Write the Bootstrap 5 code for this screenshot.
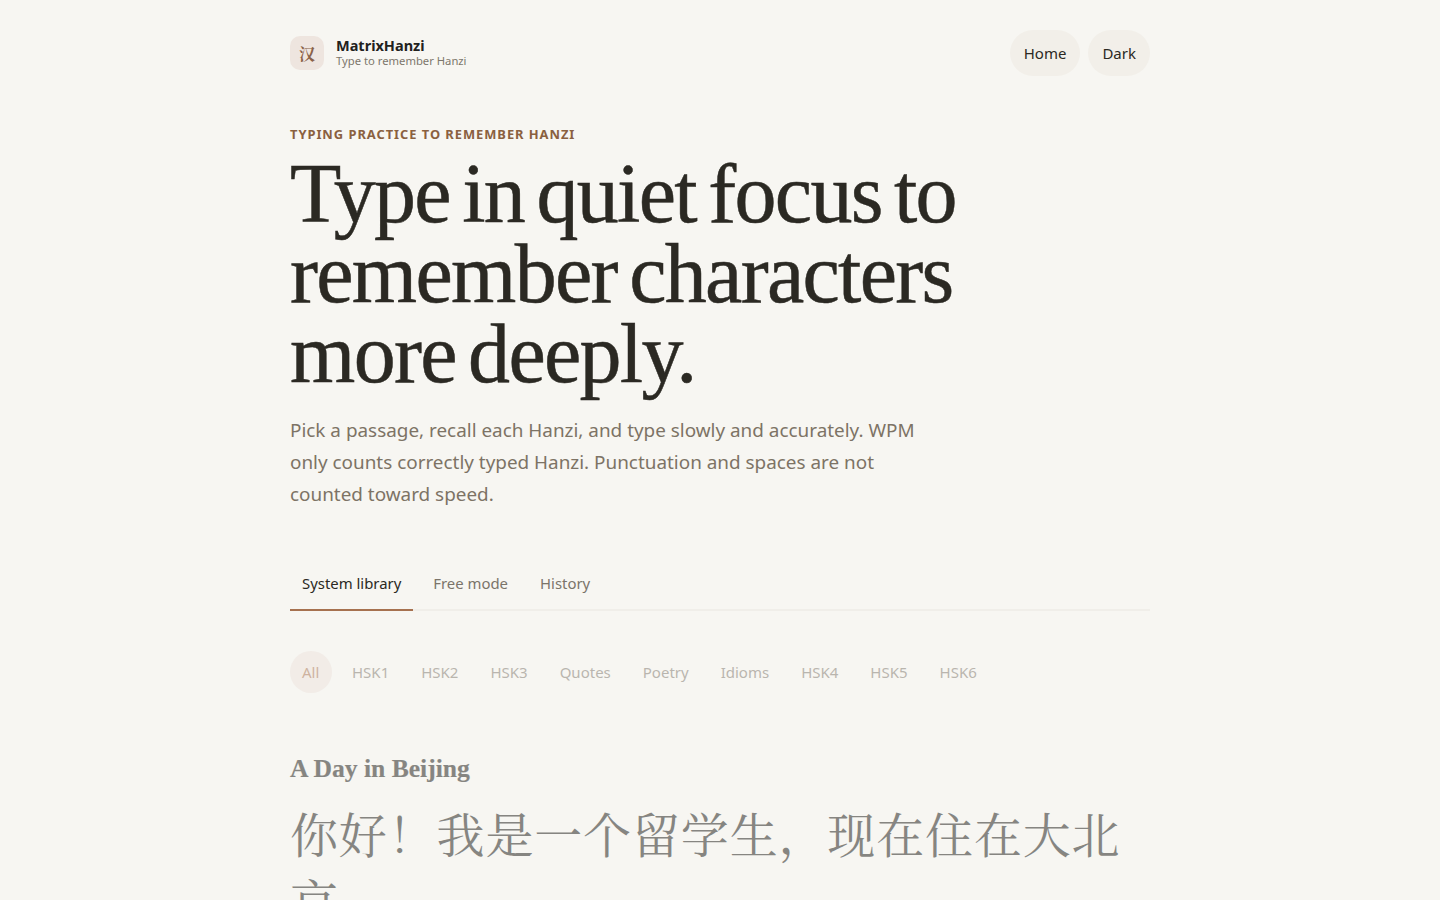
<!doctype html>
<html lang="en">
<head>
<meta charset="utf-8">
<title>MatrixHanzi</title>
<link href="https://cdn.jsdelivr.net/npm/bootstrap@5.3.0/dist/css/bootstrap.min.css" rel="stylesheet">
<style>
html,body{height:900px;overflow:hidden}
body{background:#f7f6f2;color:#2b2923;font-family:"Noto Sans","Open Sans",sans-serif}
.shell{width:860px;margin:0 auto}
.topbar{height:46px;margin-top:30px}
.logo-box{width:34px;height:34px;border-radius:10px;background:#eee5df;color:#8a6248;font:700 16px "Noto Serif CJK SC","Noto Sans CJK SC",serif}
.brand-name{font-size:14.5px;font-weight:700;line-height:16px;color:#22211d}
.brand-sub{font-size:11.25px;line-height:16px;color:#7d766c}
.pill-btn{height:46px;border-radius:23px;background:#f2efe9;font-size:15px;color:#2b2923;padding:0 14px;border:0}
.eyebrow{margin-top:49px;font-size:12.9px;font-weight:700;letter-spacing:.96px;line-height:18px;color:#8a6040}
.hero-title{margin:11px 0 0;font-family:"Liberation Serif",serif;font-size:84px;font-weight:400;line-height:80px;letter-spacing:-1.7px;word-spacing:-7px;color:#2b2923;max-width:720px;-webkit-text-stroke:.5px #2b2923}
.hero-copy{margin:20px 0 0;max-width:640px;font-size:18.9px;line-height:32px;color:#7d7365}
.tab-row{margin-top:35px;height:66px;border-bottom:2px solid #f0eee9}
.tab-item{padding:0 12px;height:66px;line-height:76px;font-size:14.9px;color:#7b746a}
.tab-item.on{color:#2b2923;border-bottom:2px solid #a6714f}
.filter-row{margin-top:40px;gap:8px;opacity:.5}
.filter-item{height:42px;line-height:42px;padding:0 12px;border-radius:21px;font-size:15px;color:#7d766c}
.filter-item.on{background:#eee3dd;color:#a6714f;min-width:42px}
.fade-part{opacity:.55}
.passage-title{margin-top:60px;font:700 25.6px/32px "Liberation Serif",serif;color:#2a2a26;-webkit-text-stroke:.2px #2a2a26}
.passage-text{margin-top:14px;font:48px/67px "Noto Serif CJK SC","Noto Sans CJK SC",serif;letter-spacing:.85px;color:#2a2a26;max-width:860px}
</style>
</head>
<body>
<div class="shell">
  <header class="topbar d-flex justify-content-between align-items-center">
    <div class="d-flex align-items-center gap-2">
      <div class="logo-box d-flex align-items-center justify-content-center">汉</div>
      <div class="ms-1">
        <div class="brand-name">MatrixHanzi</div>
        <div class="brand-sub">Type to remember Hanzi</div>
      </div>
    </div>
    <div class="d-flex gap-2">
      <button class="btn pill-btn">Home</button>
      <button class="btn pill-btn">Dark</button>
    </div>
  </header>
  <div class="eyebrow text-uppercase">Typing practice to remember Hanzi</div>
  <h1 class="hero-title">Type in quiet focus to remember characters more deeply.</h1>
  <p class="hero-copy">Pick a passage, recall each Hanzi, and type slowly and accurately. WPM only counts correctly typed Hanzi. Punctuation and spaces are not counted toward speed.</p>
  <nav class="tab-row d-flex">
    <div class="tab-item on">System library</div>
    <div class="tab-item ms-2">Free mode</div>
    <div class="tab-item ms-2">History</div>
  </nav>
  <div class="filter-row d-flex">
    <div class="filter-item on">All</div>
    <div class="filter-item">HSK1</div>
    <div class="filter-item">HSK2</div>
    <div class="filter-item">HSK3</div>
    <div class="filter-item">Quotes</div>
    <div class="filter-item">Poetry</div>
    <div class="filter-item">Idioms</div>
    <div class="filter-item">HSK4</div>
    <div class="filter-item">HSK5</div>
    <div class="filter-item">HSK6</div>
  </div>
  <div class="fade-part">
    <div class="passage-title">A Day in Beijing</div>
    <div class="passage-text">你好！我是一个留学生，现在住在大北京</div>
  </div>
</div>
</body>
</html>
